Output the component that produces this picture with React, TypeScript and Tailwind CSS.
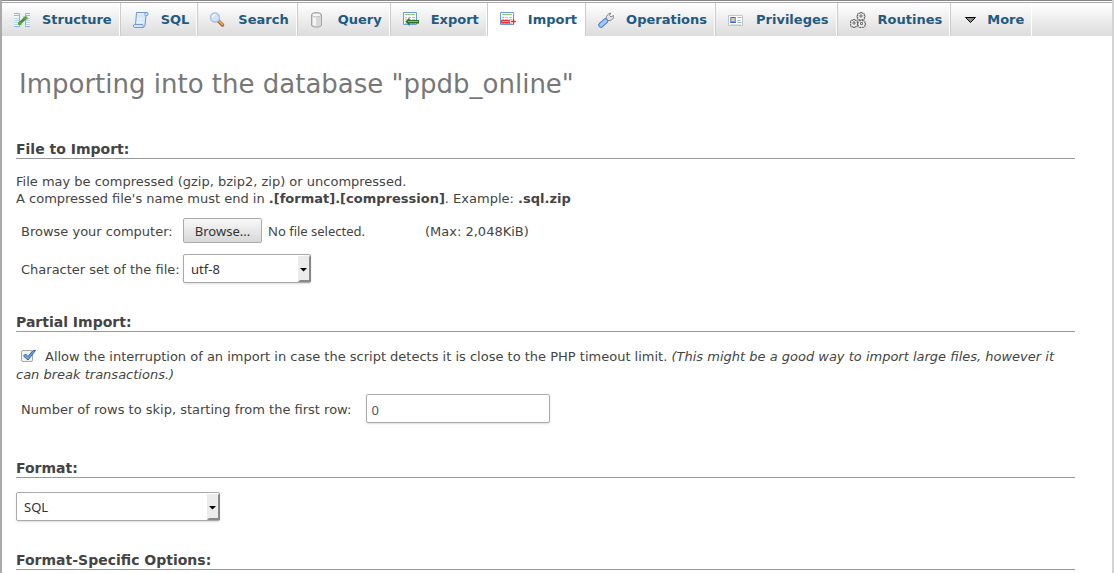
import { useRef, useState } from 'react'
import type { ReactNode } from 'react'
import { clsx } from 'clsx'

function Icon({ children }: { children: ReactNode }) {
  return (
    <svg viewBox="0 0 16 16" className="h-4 w-4 shrink-0" aria-hidden="true">
      {children}
    </svg>
  )
}

function StructureIcon() {
  return (
    <Icon>
      <path d="M0 1h6v13H0zM11 1h5v13h-5z" fill="#f4f8fe" />
      <path d="M0 3.500h5M12 3.500h4" stroke="#8fd07a" />
      <path d="M0 6.500h5M0 8.500h5M0 10.500h5M0 12.500h5M12 6.500h4M12 8.500h4M12 10.500h4M12 12.500h4" stroke="#b9d2f2" />
      <path d="M0 1.500h5.500v12.500M16 1.500h-4.500v12M0 14.500h6M11 14.500h5" fill="none" stroke="#8db3e6" />
      <path d="M5.500 11.500l6-5.500" stroke="#3f9137" strokeWidth="2.800" />
      <path d="M4 11.500h3.500M9.500 6h4" stroke="#56a84b" strokeWidth="3" />
    </Icon>
  )
}

function SqlIcon() {
  return (
    <Icon>
      <path
        d="M3.500.500h10.500c1.500 0 1.500 3 0 3h-1l-1 9.500c0 1.500-1 2.500-2 2.500h-8.500c-1.500 0-1.500-3 0-3h1z"
        fill="#d5e6fb"
        stroke="#6d99d6"
      />
      <path d="M4.500 2h7M4 7h6.500M3.500 10h6.500" stroke="#f3f8ff" />
      <path d="M1.500 12.500h8c1 1 .500 2 .500 3M12 3.500c-.500-1 0-2.500 1-3" fill="none" stroke="#6d99d6" />
    </Icon>
  )
}

function SearchIcon() {
  return (
    <Icon>
      <path d="M8.500 9l4 4" stroke="#a9682c" strokeWidth="3.500" strokeLinecap="round" />
      <path d="M9 9l3.500 3.500" stroke="#eeb169" strokeWidth="1.500" strokeLinecap="round" />
      <circle cx="5" cy="5.500" r="4.500" fill="#cfe2fb" stroke="#a9bde0" strokeWidth="1.300" />
      <path d="M2.500 5.500c0-2 1.500-3 3-3" fill="none" stroke="#fff" strokeWidth="1.300" />
    </Icon>
  )
}

function QueryIcon() {
  return (
    <Icon>
      <path d="M1.500 3c0-3.300 10-3.300 10 0v10c0 2.800-10 2.800-10 0z" fill="#d8d8d8" stroke="#a3a3a3" />
      <path d="M3 5.500h3v8.500l-3-1z" fill="#f6f6f6" />
      <ellipse cx="6.500" cy="3" rx="4.500" ry="1.800" fill="#f7f7f7" stroke="#bbb" strokeWidth=".8" />
    </Icon>
  )
}

function TableBase() {
  return (
    <>
      <path d="M.500.500h13v12h-13z" fill="#fff" stroke="#6e9bdc" />
      <path d="M2 2.500h10" stroke="#8cca76" />
      <path d="M2 5.500h10M2 7.500h10M2 9.500h10M2 11.500h10" stroke="#a9c7ef" />
      <path d="M4.500 4v8M8.500 4v8" stroke="#fff" />
    </>
  )
}

function ExportIcon() {
  return (
    <Icon>
      <TableBase />
      <path d="M2.500 9.500l4-4V8H16v3.500H6.500V14z" fill="#2c7327" />
      <path d="M5 9.500h10" stroke="#7fc36b" />
    </Icon>
  )
}

function ImportIcon() {
  return (
    <Icon>
      <TableBase />
      <path d="M1 8h9v3.500H1z" fill="#f03030" />
      <path d="M2 9.500h8" stroke="#ff9d9d" />
      <path d="M11 9.500h5M13.500 7v5.500" stroke="#f03030" strokeWidth="1.300" />
    </Icon>
  )
}

function OperationsIcon() {
  return (
    <Icon>
      <path
        d="M9 8.500L8 6.500c.500-3 2-5 5-5.500l-1.500 2.500 1.500 1.500 2.500-1.500c.500 3-1.500 5-4.500 5z"
        fill="#e3e3e3"
        stroke="#888"
      />
      <path d="M3 13l4.500-4" stroke="#4e79c6" strokeWidth="5.500" strokeLinecap="round" />
      <path d="M3 13l4.500-4" stroke="#a5c6f7" strokeWidth="3.500" strokeLinecap="round" />
    </Icon>
  )
}

function PrivilegesIcon() {
  return (
    <Icon>
      <path d="M.500 3.500h14v10H.500z" fill="#fff" stroke="#c4c4c4" />
      <path d="M2 5h6v6H2z" fill="#6fa0e3" />
      <path d="M3.500 6h3v3h-3z" fill="#f5c79a" />
      <path d="M3.500 5.500h3" stroke="#7c4c26" />
      <path d="M2.500 10.500h5" stroke="#3167b5" />
      <path d="M9.500 5.500h4M9.500 8.500h3M9.500 10.500h4" stroke="#8fb2e2" />
      <path d="M2 12.500h11" stroke="#ddd" />
    </Icon>
  )
}

function Gear({ x, y }: { x: number; y: number }) {
  return (
    <g transform={`translate(${x} ${y})`}>
      <path
        d="M-1-3.500h2v1l1.500-.500 1 1-.500 1.500h1v2h-1l.500 1.500-1 1-1.500-.500v1h-2v-1l-1.500.500-1-1 .500-1.500h-1v-2h1l-.500-1.500 1-1 1.500.500z"
        fill="#eee"
        stroke="#666"
        strokeWidth=".9"
      />
      <path d="M-1-1h2v2h-2z" fill="#fff" stroke="#666" strokeWidth=".9" />
    </g>
  )
}

function RoutinesIcon() {
  return (
    <Icon>
      <Gear x={11} y={4} />
      <Gear x={4} y={11} />
      <Gear x={11.500} y={11.500} />
    </Icon>
  )
}

function MoreIcon() {
  return (
    <Icon>
      <path d="M2.500 5.500h10l-5 5z" fill="#888" stroke="#000" />
    </Icon>
  )
}

const tabs = [
  { label: 'Structure', icon: <StructureIcon /> },
  { label: 'SQL', icon: <SqlIcon /> },
  { label: 'Search', icon: <SearchIcon /> },
  { label: 'Query', icon: <QueryIcon /> },
  { label: 'Export', icon: <ExportIcon /> },
  { label: 'Import', icon: <ImportIcon /> },
  { label: 'Operations', icon: <OperationsIcon /> },
  { label: 'Privileges', icon: <PrivilegesIcon /> },
  { label: 'Routines', icon: <RoutinesIcon /> },
]

const tabClass = 'flex items-center border-r border-l border-l-[#ccc] border-r-white pr-[7px] pl-3 first:border-l-0'

function TopMenu({ active }: { active: string }) {
  return (
    <nav className="border-t border-[#8a8589] pt-px">
      <div className="flex h-[34px] border-t border-[#aaa] bg-linear-to-b from-white to-[#dcdcdc] text-[13px] font-bold text-[#235a81]">
        {tabs.map((tab) => (
          <a key={tab.label} href="#" className={clsx(tabClass, 'gap-3', tab.label === active && 'bg-white')}>
            {tab.icon}
            {tab.label}
          </a>
        ))}
        <a href="#" className={clsx(tabClass, 'gap-2')}>
          <MoreIcon />
          More
        </a>
      </div>
    </nav>
  )
}

function SectionTitle({ children }: { children: ReactNode }) {
  return <h3 className="border-b border-[#999] text-[14px] leading-[18px] font-bold">{children}</h3>
}

function Select({ id, label, options, className }: { id: string; label?: string; options: string[]; className: string }) {
  return (
    <div className={clsx('relative h-[29px]', className)}>
      <select
        id={id}
        aria-label={label}
        className="h-full w-full appearance-none rounded-xs border border-[#aaa] bg-white pt-0.5 pl-[7px] font-['Noto_Sans'] text-[13px] text-[#333] shadow-[0_1px_2px_#ddd]"
      >
        {options.map((o) => (
          <option key={o}>{o}</option>
        ))}
      </select>
      <svg viewBox="0 0 13 27" className="pointer-events-none absolute top-px right-0 h-[27px] w-[13px]" aria-hidden="true">
        <path d="M0 1h13v26H0z" fill="#ececec" />
        <path d="M13 0v27H0l2-2h9V2z" fill="#888" />
        <path d="M2 13h7l-3.500 3.500z" fill="#000" />
      </svg>
    </div>
  )
}

export default function App() {
  const fileRef = useRef<HTMLInputElement>(null)
  const [fileName, setFileName] = useState('')
  const [interrupt, setInterrupt] = useState(true)
  const [skip, setSkip] = useState('0')

  return (
    <div className="min-h-screen border-r-2 border-l-2 border-r-[#d3d3d3] border-l-[#aaa] bg-white font-['DejaVu_Sans',sans-serif] text-[13px] leading-[17px] text-[#444]">
      <TopMenu active="Import" />

      <main className="mr-[37px] ml-3.5 pt-8">
        <h2 className="pl-[3px] text-[26px] leading-8 text-[#777]">Importing into the database "ppdb_online"</h2>

        <section className="mt-10">
          <SectionTitle>File to Import:</SectionTitle>
          <p className="mt-3.5">
            File may be compressed (gzip, bzip2, zip) or uncompressed.
            <br />
            A compressed file's name must end in <b>.[format].[compression]</b>. Example: <b>.sql.zip</b>
          </p>
          <div className="mt-[11px] flex items-center pl-[5px]">
            <label htmlFor="import-file" className="w-[162px] pt-0.5">
              Browse your computer:
            </label>
            <input
              ref={fileRef}
              id="import-file"
              type="file"
              className="hidden"
              onChange={(e) => setFileName(e.target.files?.[0]?.name ?? '')}
            />
            <button
              onClick={() => fileRef.current?.click()}
              className="h-[25px] w-[79px] rounded-xs border border-[#aaa] bg-linear-to-b from-[#f8f8f8] to-[#d8d8d8] pt-0.5 font-['Noto_Sans'] text-[#333]"
            >
              Browse...
            </button>
            <span className="w-[163px] pt-0.5 pl-1.5 font-['Noto_Sans']">{fileName || 'No file selected.'}</span>
            <span className="pt-0.5">(Max: 2,048KiB)</span>
          </div>
          <div className="mt-[11px] flex items-center pl-[5px]">
            <label htmlFor="charset" className="w-[162px] pt-0.5 whitespace-nowrap">
              Character set of the file:
            </label>
            <Select id="charset" options={['utf-8', 'iso-8859-1', 'utf-16']} className="w-32" />
          </div>
        </section>

        <section className="mt-[30px]">
          <SectionTitle>Partial Import:</SectionTitle>
          <p className="mt-4 leading-[18px]">
            <span className="relative mr-2 ml-[5px] inline-block h-4 w-4 align-text-bottom">
              <input
                id="interrupt"
                type="checkbox"
                checked={interrupt}
                onChange={(e) => setInterrupt(e.target.checked)}
                className="mt-0.5 block h-3 w-3 appearance-none rounded-xs border border-[#a5a89c] bg-[#f3f3f0]"
              />
              {interrupt && (
                <svg viewBox="0 0 16 16" className="pointer-events-none absolute inset-0 h-4 w-4" aria-hidden="true">
                  <path d="M2.500 8l2-2L7 8.500 12 2.500h2.500L7 12z" fill="#6fa6e2" stroke="#2d61a5" strokeLinejoin="round" />
                </svg>
              )}
            </span>
            <label htmlFor="interrupt">
              Allow the interruption of an import in case the script detects it is close to the PHP timeout limit.{' '}
              <i>(This might be a good way to import large files, however it can break transactions.)</i>
            </label>
          </p>
          <div className="mt-2.5 flex items-center gap-[15px] pl-[5px]">
            <label htmlFor="skip" className="pt-0.5">
              Number of rows to skip, starting from the first row:
            </label>
            <input
              id="skip"
              type="text"
              value={skip}
              onChange={(e) => setSkip(e.target.value)}
              className="h-[29px] w-[184px] rounded-xs border border-[#aaa] px-1 pt-0.5 font-['Noto_Sans'] text-[#555] shadow-[0_1px_2px_#ddd]"
            />
          </div>
        </section>

        <section className="mt-9">
          <SectionTitle>Format:</SectionTitle>
          <div className="mt-3.5">
            <Select id="format" label="Format" options={['SQL', 'CSV', 'XML']} className="w-[204px]" />
          </div>
        </section>

        <section className="mt-[30px]">
          <SectionTitle>Format-Specific Options:</SectionTitle>
        </section>
      </main>
    </div>
  )
}
